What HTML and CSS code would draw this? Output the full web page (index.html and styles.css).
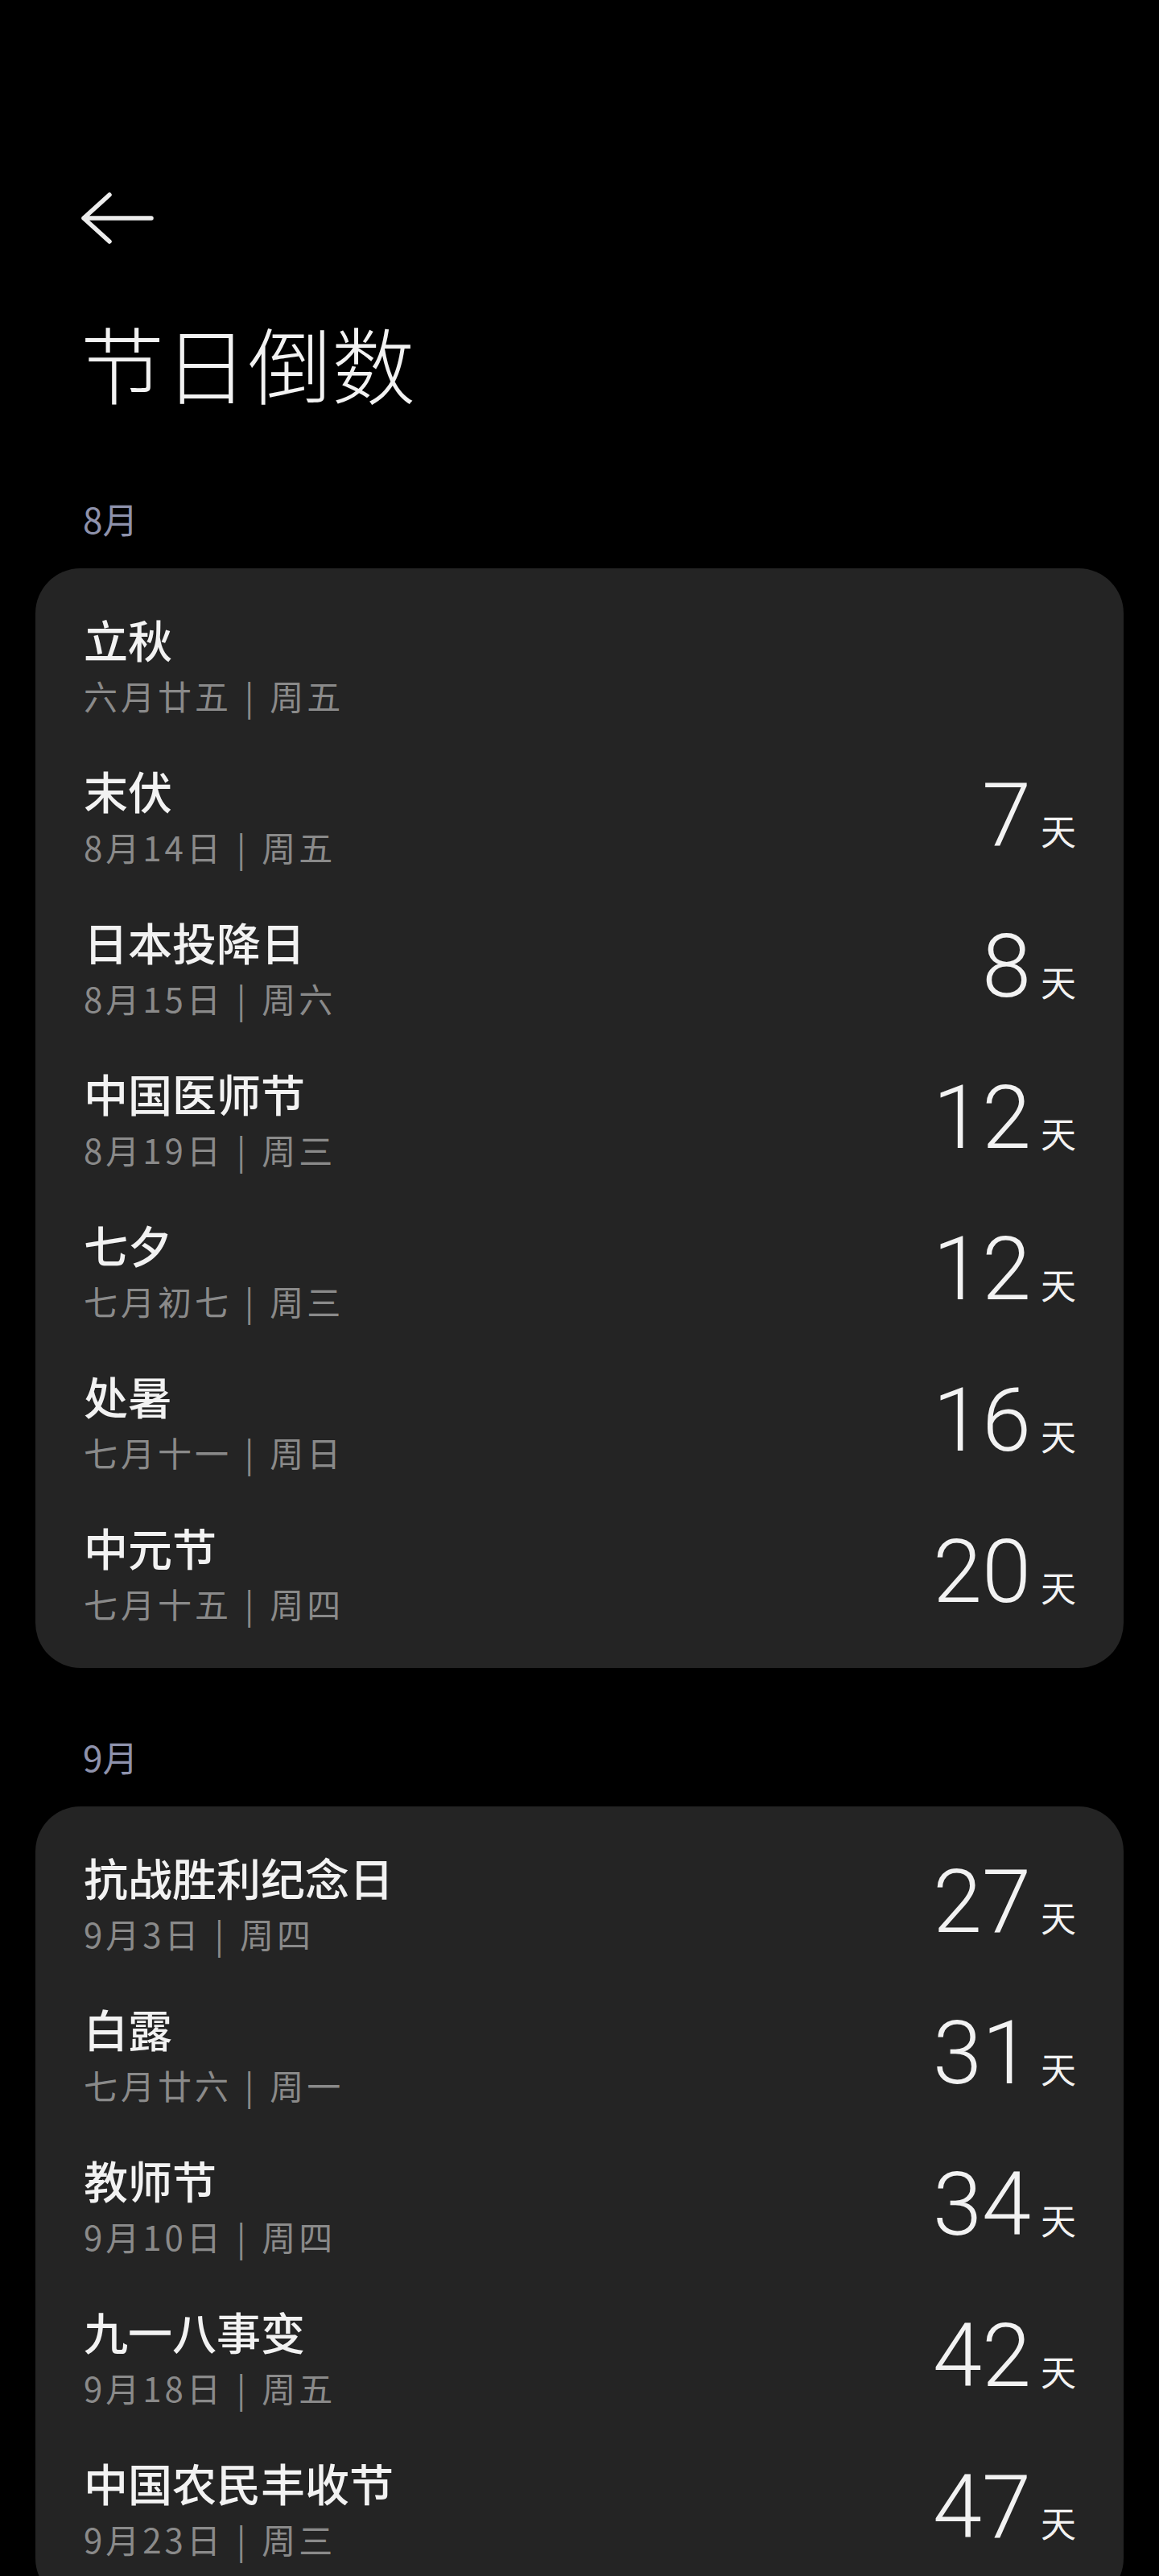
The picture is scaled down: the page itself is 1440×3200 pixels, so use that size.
FILE: index.html
```html
<!DOCTYPE html>
<html lang="zh-CN">
<head>
    <meta charset="UTF-8">
    <meta name="viewport" content="width=device-width, initial-scale=1.0">
    <title>节日倒数</title>
    <link rel="stylesheet" href="styles.css">
</head>
<body>
    <header class="top">
        <a class="back" aria-label="返回">
            <svg width="92" height="70" viewBox="0 0 92 70">
                <path d="M4 35 H88 M36 6 L4 35 L36 64" fill="none" stroke="#ededed" stroke-width="5.5" stroke-linecap="round" stroke-linejoin="round"/>
            </svg>
        </a>
        <h1 class="page-title">节日倒数</h1>
    </header>

    <!-- August -->
    <section class="month">
        <h2 class="month-label">8月</h2>
        <div class="card">
            <div class="row">
                <div class="info">
                    <div class="name">立秋</div>
                    <div class="date">六月廿五<span class="sep">|</span>周五</div>
                </div>
            </div>
            <div class="row">
                <div class="info">
                    <div class="name">末伏</div>
                    <div class="date">8月14日<span class="sep">|</span>周五</div>
                </div>
                <div class="count"><span class="num">7</span><span class="unit">天</span></div>
            </div>
            <div class="row">
                <div class="info">
                    <div class="name">日本投降日</div>
                    <div class="date">8月15日<span class="sep">|</span>周六</div>
                </div>
                <div class="count"><span class="num">8</span><span class="unit">天</span></div>
            </div>
            <div class="row">
                <div class="info">
                    <div class="name">中国医师节</div>
                    <div class="date">8月19日<span class="sep">|</span>周三</div>
                </div>
                <div class="count"><span class="num">12</span><span class="unit">天</span></div>
            </div>
            <div class="row">
                <div class="info">
                    <div class="name">七夕</div>
                    <div class="date">七月初七<span class="sep">|</span>周三</div>
                </div>
                <div class="count"><span class="num">12</span><span class="unit">天</span></div>
            </div>
            <div class="row">
                <div class="info">
                    <div class="name">处暑</div>
                    <div class="date">七月十一<span class="sep">|</span>周日</div>
                </div>
                <div class="count"><span class="num">16</span><span class="unit">天</span></div>
            </div>
            <div class="row">
                <div class="info">
                    <div class="name">中元节</div>
                    <div class="date">七月十五<span class="sep">|</span>周四</div>
                </div>
                <div class="count"><span class="num">20</span><span class="unit">天</span></div>
            </div>
        </div>
    </section>

    <!-- September -->
    <section class="month">
        <h2 class="month-label">9月</h2>
        <div class="card">
            <div class="row">
                <div class="info">
                    <div class="name">抗战胜利纪念日</div>
                    <div class="date">9月3日<span class="sep">|</span>周四</div>
                </div>
                <div class="count"><span class="num">27</span><span class="unit">天</span></div>
            </div>
            <div class="row">
                <div class="info">
                    <div class="name">白露</div>
                    <div class="date">七月廿六<span class="sep">|</span>周一</div>
                </div>
                <div class="count"><span class="num">31</span><span class="unit">天</span></div>
            </div>
            <div class="row">
                <div class="info">
                    <div class="name">教师节</div>
                    <div class="date">9月10日<span class="sep">|</span>周四</div>
                </div>
                <div class="count"><span class="num">34</span><span class="unit">天</span></div>
            </div>
            <div class="row">
                <div class="info">
                    <div class="name">九一八事变</div>
                    <div class="date">9月18日<span class="sep">|</span>周五</div>
                </div>
                <div class="count"><span class="num">42</span><span class="unit">天</span></div>
            </div>
            <div class="row">
                <div class="info">
                    <div class="name">中国农民丰收节</div>
                    <div class="date">9月23日<span class="sep">|</span>周三</div>
                </div>
                <div class="count"><span class="num">47</span><span class="unit">天</span></div>
            </div>
        </div>
    </section>
</body>
</html>
```

FILE: styles.css
```css
body {
    margin: 0;
    background: #000;
    color: #f2f2f2;
    font-family: "Noto Sans CJK SC", "Noto Sans", sans-serif;
}
.top {
    padding: 236px 0 0 100px;
}
.back {
    display: block;
    width: 92px;
    height: 70px;
    cursor: pointer;
}
.back svg {
    display: block;
}
.page-title {
    margin: 92px 0 0 0;
    font-size: 104px;
    line-height: 1;
    font-weight: 300;
    color: #f2f2f2;
}
.month-label {
    margin: 0 0 40px 103px;
    font-size: 44px;
    line-height: 1;
    font-weight: 400;
    color: #8e92ac;
}
.month:first-of-type .month-label {
    margin-top: 120px;
}
.month + .month .month-label {
    margin-top: 88px;
}
.card {
    margin: 0 44px;
    padding: 25px 59px 25px 60px;
    background: #242424;
    border-radius: 56px;
}
.row {
    height: 188px;
    display: flex;
    align-items: center;
    justify-content: space-between;
}
.name {
    font-size: 55px;
    line-height: 1;
    font-weight: 500;
    color: #f2f2f2;
}
.date {
    margin-top: 22px;
    font-size: 42px;
    line-height: 1;
    letter-spacing: 4px;
    color: #8a8a8a;
}
.sep {
    margin: 0 16px;
}
.count {
    display: flex;
    align-items: baseline;
}
.num {
    font-family: Roboto, "Noto Sans", sans-serif;
    font-size: 110px;
    line-height: 1;
    font-weight: 300;
    color: #f2f2f2;
}
.unit {
    margin-left: 12px;
    font-size: 44px;
    line-height: 1;
    color: #f2f2f2;
}
```
